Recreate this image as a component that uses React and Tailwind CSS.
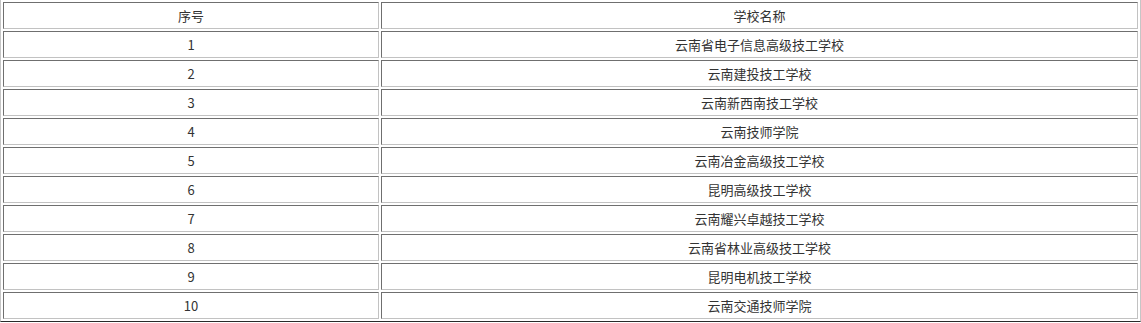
import React from 'react';

const schools = [
  '云南省电子信息高级技工学校',
  '云南建投技工学校',
  '云南新西南技工学校',
  '云南技师学院',
  '云南冶金高级技工学校',
  '昆明高级技工学校',
  '云南耀兴卓越技工学校',
  '云南省林业高级技工学校',
  '昆明电机技工学校',
  '云南交通技师学院',
];

const cell =
  'h-[27px] p-0 text-center align-middle leading-[25px] border border-t-[#6f6f6f] border-l-[#6f6f6f] border-b-[#c2c2c2] border-r-[#c2c2c2]';

const App = () => {
  return (
    <div className="w-[1141px] h-[323px] bg-white overflow-hidden">
      <table
        className="w-[1141px] table-fixed border-separate border-spacing-[2px] border border-t-0 border-l-[#c6c6c6] border-r-[#c6c6c6] border-b-[#2a2a2a] text-[13px] text-[#333]"
        style={{ fontFamily: '"Noto Sans CJK SC", "Noto Sans", sans-serif' }}
      >
        <colgroup>
          <col className="w-[376px]" />
          <col />
        </colgroup>
        <tbody>
          <tr>
            <td className={cell}>序号</td>
            <td className={cell}>学校名称</td>
          </tr>
          {schools.map((name, i) => (
            <tr key={name}>
              <td className={cell}>{i + 1}</td>
              <td className={cell}>{name}</td>
            </tr>
          ))}
        </tbody>
      </table>
    </div>
  );
};

export default App;
